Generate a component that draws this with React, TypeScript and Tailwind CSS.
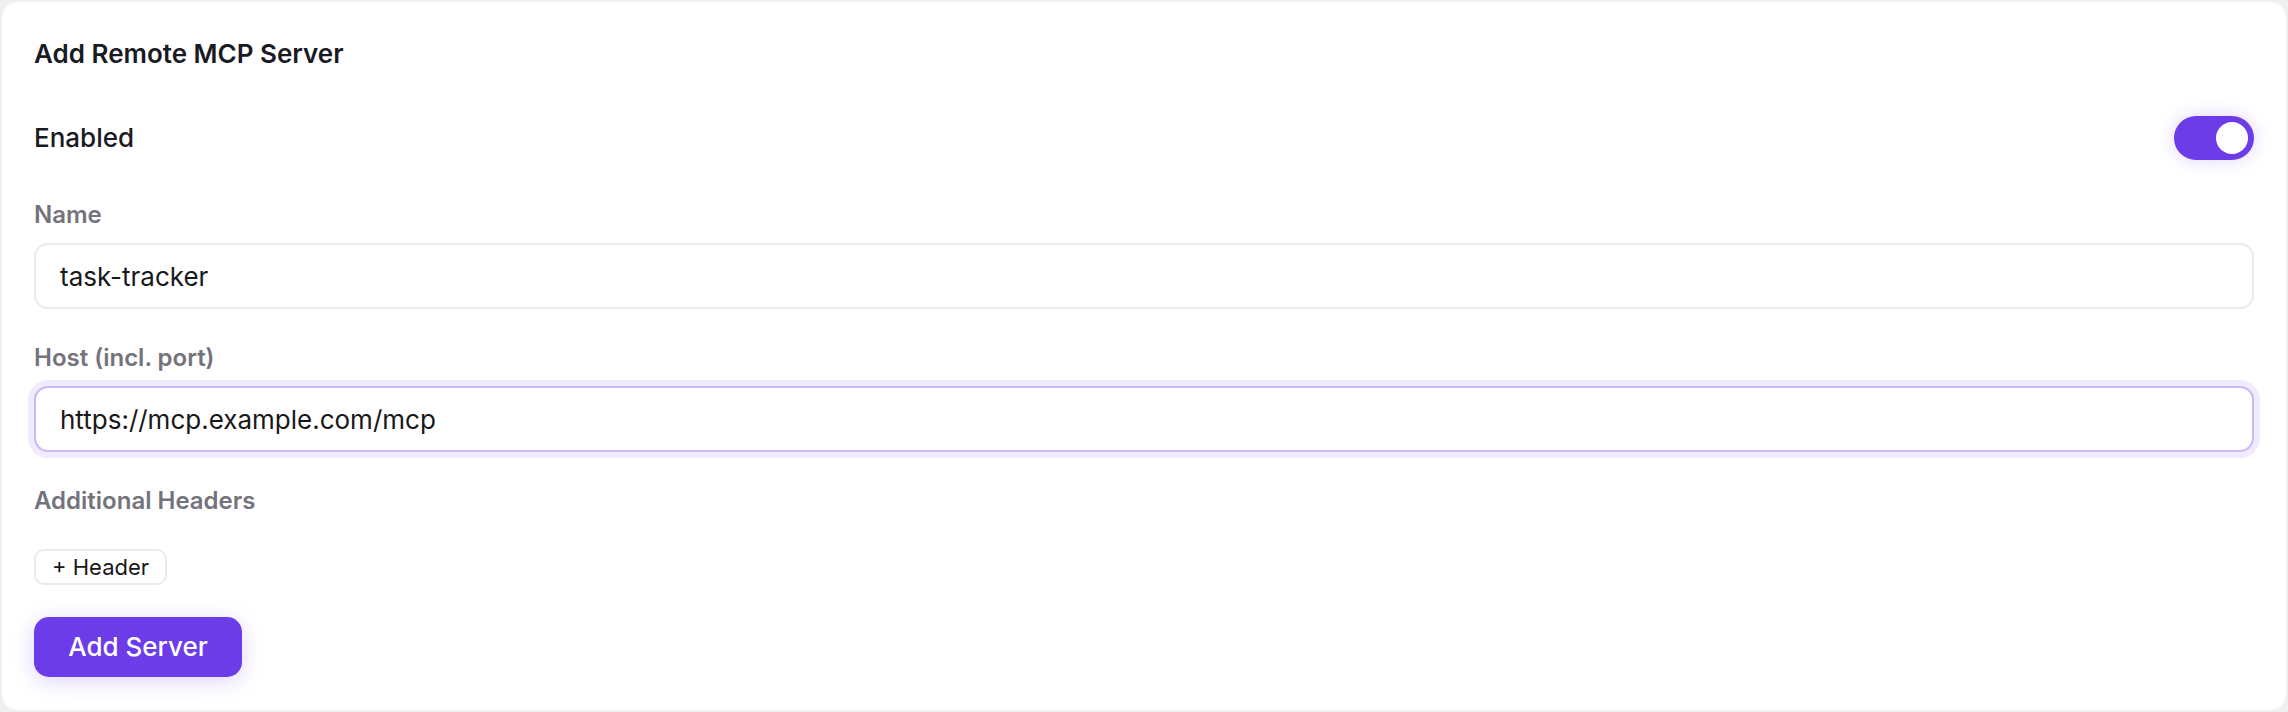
import { useState } from "react";

const inputBase =
  "w-full h-[66px] rounded-[14px] border-2 bg-white px-6 text-[26px] leading-[32px] text-[#18181b] outline-none";

const Label = ({ children }: { children: React.ReactNode }) => (
  <label className="block text-[24px] leading-[32px] font-semibold text-[#74737d]">
    {children}
  </label>
);

const App = () => {
  const [enabled, setEnabled] = useState(true);
  const [name, setName] = useState("task-tracker");
  const [host, setHost] = useState("https://mcp.example.com/mcp");

  return (
    <div className="min-h-[712px] bg-[#efefef] p-[2px] font-['Inter',sans-serif]">
      <div className="rounded-[16px] bg-white px-8 pt-[36px] pb-[33px]">
        <h2 className="text-[26px] leading-[32px] font-semibold text-[#1a1a24]">
          Add Remote MCP Server
        </h2>

        <div className="mt-[46px] flex h-[44px] items-center justify-between">
          <span className="text-[26px] leading-[32px] font-medium text-[#1a1a24]">Enabled</span>
          <button
            type="button"
            onClick={() => setEnabled(!enabled)}
            className={`flex h-[44px] w-[80px] items-center rounded-full p-[6px] shadow-[0_0_18px_rgba(109,60,233,0.22)] ${
              enabled ? "justify-end bg-[#6d3ce9]" : "justify-start bg-[#d4d4d8]"
            }`}
          >
            <span className="h-[32px] w-[32px] rounded-full bg-white" />
          </button>
        </div>

        <div className="mt-[39px]">
          <Label>Name</Label>
          <input
            value={name}
            onChange={(e) => setName(e.target.value)}
            className={`${inputBase} mt-3 border-[#ebebeb]`}
          />
        </div>

        <div className="mt-[33px]">
          <Label>Host (incl. port)</Label>
          <input
            value={host}
            onChange={(e) => setHost(e.target.value)}
            className={`${inputBase} mt-3 border-[#c8b8fb] shadow-[0_0_0_6px_#f0ebfe]`}
          />
        </div>

        <div className="mt-[33px]">
          <Label>Additional Headers</Label>
          <button
            type="button"
            className="mt-[32px] h-[36px] rounded-[10px] border-2 border-[#ebebeb] bg-white px-[16px] text-[22px] leading-[28px] text-[#18181b]"
          >
            + Header
          </button>
        </div>

        <button
          type="button"
          className="mt-[32px] block h-[60px] w-[208px] rounded-[15px] bg-[#6d3ce9] text-[26px] leading-[32px] font-medium text-white shadow-[0_4px_22px_rgba(109,60,233,0.22)]"
        >
          Add Server
        </button>
      </div>
    </div>
  );
};

export default App;
